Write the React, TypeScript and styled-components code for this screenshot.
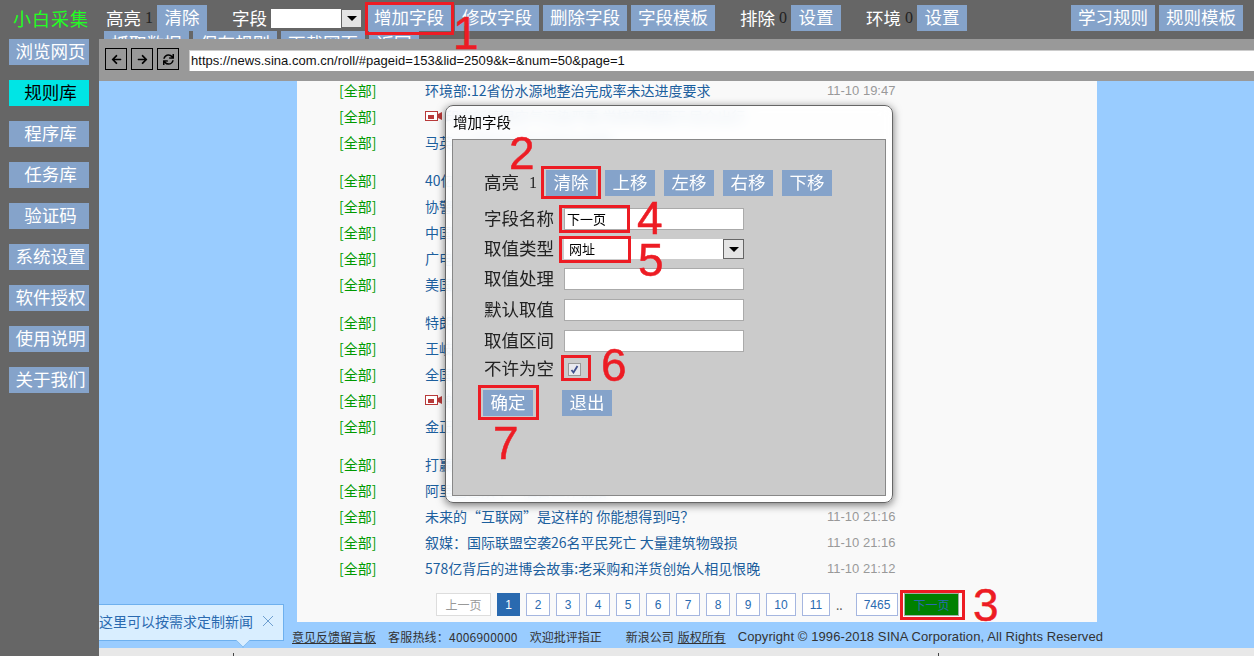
import React from "react";
import styled, { createGlobalStyle } from "styled-components";
import { FaArrowLeft, FaArrowRight, FaSync } from "react-icons/fa";

const GlobalStyle = createGlobalStyle`
  html, body {
    margin: 0;
    padding: 0;
    background: #666;
    font-family: "Noto Sans CJK SC", "Liberation Sans", sans-serif;
  }
  * {
    box-sizing: border-box;
  }
`;

const Page = styled.div`
  position: relative;
  width: 1254px;
  height: 656px;
  overflow: hidden;
  display: flex;
  flex-direction: column;
  background: #666;
`;

const TopBar = styled.div`
  height: 39px;
  flex: none;
  overflow: hidden;
  padding: 5px 0 0 13px;
`;

const TopRow = styled.div`
  display: flex;
  height: 26px;
  align-items: center;
`;

const HiddenRow = styled.div`
  display: flex;
  gap: 4px;
  padding-left: 91px;
`;

const Logo = styled.div`
  width: 76px;
  font-size: 18px;
  letter-spacing: 1px;
  line-height: 26px;
  color: #22ff22;
  white-space: nowrap;
`;

const Btn = styled.button<{ $w?: number; $ml?: number; $active?: boolean }>`
  flex: none;
  width: ${(p) => p.$w ?? 50}px;
  height: 26px;
  margin: 0 0 0 ${(p) => p.$ml ?? 0}px;
  padding: 0 0 2px;
  border: none;
  background: ${(p) => (p.$active ? "#00e5e5" : "#85a3ca")};
  color: ${(p) => (p.$active ? "#000" : "#fff")};
  font-family: inherit;
  font-size: 17.5px;
  line-height: 24px;
  white-space: nowrap;
`;

const SideBtn = styled(Btn)`
  padding-left: 3px;
`;

const BarLabel = styled.span<{ $ml: number }>`
  margin: 0 0 2px ${(p) => p.$ml}px;
  font-size: 17.5px;
  color: #fff;
  white-space: nowrap;
`;

const Count = styled.span<{ $w: number }>`
  flex: none;
  width: ${(p) => p.$w}px;
  text-align: center;
  font-family: "Liberation Serif", serif;
  font-size: 16px;
  color: #222;
`;

const SelectBox = styled.div<{ $w: number; $h: number; $ml?: number }>`
  display: flex;
  flex: none;
  align-items: center;
  width: ${(p) => p.$w}px;
  height: ${(p) => p.$h}px;
  margin-left: ${(p) => p.$ml ?? 0}px;
  background: #fff;
  font-size: 13px;
  color: #000;
`;

const SelectText = styled.span`
  flex: 1;
  padding: 0 0 2px 5px;
`;

const SelectArrow = styled.span`
  display: flex;
  align-items: center;
  justify-content: center;
  flex: none;
  width: 21px;
  height: 100%;
  border: 1px solid #666;
  background: #e4e4e4;

  &::before {
    content: "";
    border-style: solid;
    border-width: 5px 5px 0;
    border-color: #000 transparent transparent;
  }
`;

const Body = styled.div`
  display: flex;
  flex: 1;
  min-height: 0;
`;

const Sidebar = styled.div`
  display: flex;
  flex-direction: column;
  gap: 15px;
  flex: none;
  width: 99px;
  padding-left: 9px;
`;

const Main = styled.div`
  display: flex;
  flex-direction: column;
  flex: 1;
  min-width: 0;
`;

const Toolbar = styled.div`
  display: flex;
  align-items: center;
  flex: none;
  height: 42px;
  padding-left: 6px;
  background: #999;
`;

const NavBtn = styled.button`
  display: flex;
  align-items: center;
  justify-content: center;
  flex: none;
  width: 22px;
  height: 22px;
  margin: 0 4px 2px 0;
  padding: 0;
  border: 1px solid #000;
  background: #999;
  color: #000;
  font-size: 11px;
`;

const Address = styled.div`
  flex: 1;
  height: 21px;
  margin-left: 6px;
  padding-left: 1px;
  background: #fff;
  border-top: 1px solid #ccc;
  border-left: 1px solid #ccc;
  font-family: "Liberation Sans", sans-serif;
  font-size: 13px;
  letter-spacing: 0.03px;
  line-height: 20px;
  color: #111;
  white-space: nowrap;
`;

const Viewer = styled.div`
  position: relative;
  display: flex;
  flex-direction: column;
  flex: 1;
  min-height: 0;
  background: #99ccff;
`;

const NewsPanel = styled.div`
  flex: none;
  width: 800px;
  height: 541px;
  margin-left: 198px;
  overflow: hidden;
  background: #f9f9f9;
`;

const NewsList = styled.div`
  margin-top: -4px;
`;

const Group = styled.div`
  margin-bottom: 12px;
`;

const NewsRow = styled.div`
  display: flex;
  align-items: center;
  height: 26px;
  padding-left: 42px;
`;

const Tag = styled.span`
  flex: none;
  width: 86px;
  font-size: 14px;
  color: #009a00;
`;

const Title = styled.span`
  display: flex;
  align-items: center;
  gap: 3px;
  flex: none;
  width: 402px;
  font-size: 14px;
  color: #1c5f9e;
  white-space: nowrap;
`;

const Time = styled.span`
  font-family: "Liberation Sans", sans-serif;
  font-size: 13px;
  color: #999;
  white-space: nowrap;
`;

const Pager = styled.div`
  display: flex;
  align-items: center;
  gap: 6px;
  height: 23px;
  padding-left: 139px;
`;

const PageLink = styled.span<{ $w?: number; $kind?: "current" | "off" | "next" }>`
  display: flex;
  align-items: center;
  justify-content: center;
  flex: none;
  width: ${(p) => p.$w ?? 24}px;
  height: 23px;
  font-family: "Liberation Sans", "Noto Sans CJK SC", sans-serif;
  font-size: 12px;
  color: ${(p) =>
    p.$kind === "current" ? "#fff" : p.$kind === "off" ? "#999" : "#2a6ab0"};
  background: ${(p) =>
    p.$kind === "current" ? "#2a6ab0" : p.$kind === "next" ? "#008000" : "#fff"};
  border: 1px solid
    ${(p) =>
      p.$kind === "current"
        ? "#2a6ab0"
        : p.$kind === "off"
          ? "#ddd"
          : p.$kind === "next"
            ? "#9db0a0"
            : "#a5b6e0"};
`;

const Dots = styled.span`
  flex: none;
  width: 14px;
  font-size: 12px;
  color: #555;
`;

const Footer = styled.div`
  display: flex;
  align-items: center;
  flex: none;
  gap: 12px;
  height: 26px;
  padding: 2px 0 0 193px;
  font-size: 12px;
  color: #333;
  white-space: nowrap;
`;

const FootLink = styled.span<{ $ml?: number }>`
  margin-left: ${(p) => p.$ml ?? 0}px;
  text-decoration: underline;
`;

const FootText = styled.span<{ $ml?: number }>`
  margin-left: ${(p) => p.$ml ?? 0}px;
`;

const Hotline = styled.span`
  letter-spacing: 0.2px;
`;

const Copyright = styled.span`
  font-family: "Liberation Sans", sans-serif;
  font-size: 13px;
  letter-spacing: 0.09px;
`;

const Strip = styled.div`
  display: flex;
  gap: 704px;
  flex: none;
  height: 8px;
  padding-left: 134px;
  background: #e8e8e8;
`;

const StripTick = styled.span`
  width: 1px;
  height: 3px;
  margin-top: 5px;
  background: #444;
`;

const Tip = styled.div`
  position: absolute;
  left: 0;
  top: 523px;
  display: flex;
  align-items: center;
  justify-content: space-between;
  width: 185px;
  height: 37px;
  padding: 0 10px 3px 0;
  background: #d9eeff;
  border: 1px solid #6eb0ee;
  border-left: none;
  font-size: 14px;
  color: #2a6ab0;
  white-space: nowrap;

  &::after {
    content: "";
    position: absolute;
    left: 138px;
    bottom: -7px;
    width: 11px;
    height: 11px;
    background: #d9eeff;
    border-right: 1px solid #6eb0ee;
    border-bottom: 1px solid #6eb0ee;
    transform: rotate(45deg) scale(0.8);
  }
`;

const TipClose = styled.svg`
  width: 10px;
  height: 10px;
  stroke: #6e9fd0;
  fill: none;
`;

const Dialog = styled.div`
  position: absolute;
  left: 445px;
  top: 105px;
  width: 448px;
  height: 398px;
  padding: 0 6px;
  border: 1px solid #666;
  border-radius: 8px;
  background: rgba(255, 255, 255, 0.86);
  backdrop-filter: blur(7px);
  box-shadow: 0 2px 8px rgba(0, 0, 0, 0.55);
`;

const DialogTitle = styled.div`
  height: 33px;
  padding: 5px 0 0 1px;
  font-size: 14.5px;
  line-height: 22px;
  color: #000;
`;

const DialogBody = styled.div`
  display: flex;
  flex-direction: column;
  gap: 9px;
  height: 357px;
  padding: 30px 0 0 31px;
  background: #cbcbcb;
  border: 1px solid #888;
`;

const FormRow = styled.div`
  display: flex;
  align-items: center;
`;

const ButtonRow = styled.div`
  display: flex;
  gap: 9px;
  align-items: center;
  height: 26px;
  margin-bottom: 3px;
`;

const Label = styled.label<{ $w?: number }>`
  flex: none;
  width: ${(p) => p.$w ?? 80}px;
  height: 20px;
  font-size: 17.5px;
  line-height: 18px;
  color: #222;
  white-space: nowrap;
`;

const TextField = styled.div`
  width: 180px;
  height: 22px;
  padding-left: 2px;
  background: #fff;
  border: 1px solid #aaa;
  font-size: 13px;
  line-height: 19px;
  color: #000;
`;

const CheckRow = styled(FormRow)`
  height: 16px;
`;

const Check = styled.span`
  display: flex;
  align-items: center;
  justify-content: center;
  width: 13px;
  height: 13px;
  margin-left: 4px;
  background: #e8e8ee;
  border: 1px solid #999;
`;

const ActionRow = styled.div`
  display: flex;
  margin: 4px 0 0 -1px;
`;

const MarkBox = styled.div<{ $x: number; $y: number; $w: number; $h: number }>`
  position: absolute;
  left: ${(p) => p.$x}px;
  top: ${(p) => p.$y}px;
  width: ${(p) => p.$w}px;
  height: ${(p) => p.$h}px;
  border: 3px solid #ed1c24;
  pointer-events: none;
`;

const MarkNum = styled.div<{ $x: number; $y: number }>`
  position: absolute;
  left: ${(p) => p.$x}px;
  top: ${(p) => p.$y}px;
  font-family: "Liberation Sans", sans-serif;
  font-size: 46px;
  line-height: 46px;
  color: #ed1c24;
  -webkit-text-stroke: 0.5px #ed1c24;
  pointer-events: none;
`;

const VideoIcon = () => (
  <svg width="17" height="10" viewBox="0 0 17 10">
    <rect x="0.5" y="0.5" width="12" height="9" fill="#fff" stroke="#b83a3a" />
    <rect x="3" y="4" width="6" height="4" fill="#b83a3a" />
    <path d="M13 3l4-2v8l-4-2z" fill="#b83a3a" />
  </svg>
);

const sideItems = ["浏览网页", "规则库", "程序库", "任务库", "验证码", "系统设置", "软件授权", "使用说明", "关于我们"];

type News = { title: string; time?: string; video?: boolean };

const groups: News[][] = [
  [
    { title: "环境部:12省份水源地整治完成率未达进度要求", time: "11-10 19:47" },
    { title: "印度新德里空气污染严重 学校停课两天 民众出行", video: true },
    { title: "马英九:两岸关系应当和平发展" },
  ],
  [
    { title: "40亿美元大单落地 进博会成果丰硕" },
    { title: "协警冒充警察敲诈 被判处有期徒刑" },
    { title: "中国自主研发新型客机完成试飞" },
    { title: "广电总局:加强网络视听节目管理" },
    { title: "美国加州山火持续蔓延 多人遇难" },
  ],
  [
    { title: "特朗普出席一战停战纪念活动" },
    { title: "王岐山会见外国代表团一行" },
    { title: "全国多地迎来大风降温天气" },
    { title: "航拍冬日湿地候鸟翩翩起舞", video: true },
    { title: "金正恩视察新型武器试验现场" },
  ],
  [
    { title: "打赢脱贫攻坚战 多地出实招" },
    { title: "阿里巴巴双十一准备工作就绪" },
    { title: "未来的“互联网”是这样的 你能想得到吗？", time: "11-10 21:16" },
    { title: "叙媒：国际联盟空袭26名平民死亡 大量建筑物毁损", time: "11-10 21:16" },
    { title: "578亿背后的进博会故事:老采购和洋货创始人相见恨晚", time: "11-10 21:12" },
  ],
];

const boxes = [
  { x: 365, y: 2, w: 89, h: 33 },
  { x: 541, y: 166, w: 60, h: 33 },
  { x: 559, y: 205, w: 71, h: 28 },
  { x: 559, y: 236, w: 72, h: 27 },
  { x: 561, y: 355, w: 30, h: 26 },
  { x: 478, y: 385, w: 61, h: 35 },
  { x: 900, y: 590, w: 65, h: 30 },
];

const digits = [
  { n: "1", x: 453, y: 10 },
  { n: "2", x: 509, y: 130 },
  { n: "4", x: 637, y: 195 },
  { n: "5", x: 638, y: 237 },
  { n: "6", x: 601, y: 342 },
  { n: "7", x: 493, y: 420 },
  { n: "3", x: 973, y: 582 },
];

const pages = ["2", "3", "4", "5", "6", "7", "8", "9"];

export default function App() {
  return (
    <Page>
      <GlobalStyle />
      <TopBar>
        <TopRow>
          <Logo>小白采集</Logo>
          <BarLabel $ml={17}>高亮</BarLabel>
          <Count $w={16}>1</Count>
          <Btn>清除</Btn>
          <BarLabel $ml={25}>字段</BarLabel>
          <SelectBox $w={91} $h={19} $ml={4}>
            <SelectText />
            <SelectArrow />
          </SelectBox>
          <Btn $w={84} $ml={5}>增加字段</Btn>
          <Btn $w={84} $ml={4}>修改字段</Btn>
          <Btn $w={84} $ml={4}>删除字段</Btn>
          <Btn $w={84} $ml={4}>字段模板</Btn>
          <BarLabel $ml={25}>排除</BarLabel>
          <Count $w={16}>0</Count>
          <Btn>设置</Btn>
          <BarLabel $ml={25}>环境</BarLabel>
          <Count $w={16}>0</Count>
          <Btn>设置</Btn>
          <Btn $w={84} $ml={104}>学习规则</Btn>
          <Btn $w={84} $ml={4}>规则模板</Btn>
        </TopRow>
        <HiddenRow>
          <Btn $w={85}>抓取数据</Btn>
          <Btn $w={84}>保存规则</Btn>
          <Btn $w={84}>下载网页</Btn>
          <Btn>返回</Btn>
        </HiddenRow>
      </TopBar>
      <Body>
        <Sidebar>
          {sideItems.map((item) => (
            <SideBtn key={item} $w={80} $active={item === "规则库"}>
              {item}
            </SideBtn>
          ))}
        </Sidebar>
        <Main>
          <Toolbar>
            <NavBtn><FaArrowLeft /></NavBtn>
            <NavBtn><FaArrowRight /></NavBtn>
            <NavBtn><FaSync /></NavBtn>
            <Address>https://news.sina.com.cn/roll/#pageid=153&amp;lid=2509&amp;k=&amp;num=50&amp;page=1</Address>
          </Toolbar>
          <Viewer>
            <NewsPanel>
              <NewsList>
                {groups.map((group, i) => (
                  <Group key={i}>
                    {group.map((news) => (
                      <NewsRow key={news.title}>
                        <Tag>[全部]</Tag>
                        <Title>
                          {news.video && <VideoIcon />}
                          {news.title}
                        </Title>
                        {news.time && <Time>{news.time}</Time>}
                      </NewsRow>
                    ))}
                  </Group>
                ))}
              </NewsList>
              <Pager>
                <PageLink $w={55} $kind="off">上一页</PageLink>
                <PageLink $w={23} $kind="current">1</PageLink>
                {pages.map((n) => (
                  <PageLink key={n}>{n}</PageLink>
                ))}
                <PageLink $w={30}>10</PageLink>
                <PageLink $w={28}>11</PageLink>
                <Dots>..</Dots>
                <PageLink $w={42}>7465</PageLink>
                <PageLink $w={55} $kind="next">下一页</PageLink>
              </Pager>
            </NewsPanel>
            <Footer>
              <FootLink>意见反馈留言板</FootLink>
              <Hotline>客服热线：4006900000</Hotline>
              <FootText>欢迎批评指正</FootText>
              <FootText $ml={12}>新浪公司</FootText>
              <FootLink $ml={-8}>版权所有</FootLink>
              <Copyright>Copyright © 1996-2018 SINA Corporation, All Rights Reserved</Copyright>
            </Footer>
            <Strip>
              <StripTick />
              <StripTick />
            </Strip>
            <Tip>
              这里可以按需求定制新闻
              <TipClose viewBox="0 0 10 10">
                <path d="M0 0l10 10M10 0L0 10" />
              </TipClose>
            </Tip>
          </Viewer>
        </Main>
      </Body>

      <Dialog>
        <DialogTitle>增加字段</DialogTitle>
        <DialogBody>
          <ButtonRow>
            <Label $w={36}>高亮</Label>
            <Count $w={8}>1</Count>
            <Btn>清除</Btn>
            <Btn>上移</Btn>
            <Btn>左移</Btn>
            <Btn>右移</Btn>
            <Btn>下移</Btn>
          </ButtonRow>
          <FormRow>
            <Label>字段名称</Label>
            <TextField>下一页</TextField>
          </FormRow>
          <FormRow>
            <Label>取值类型</Label>
            <SelectBox $w={180} $h={20}>
              <SelectText>网址</SelectText>
              <SelectArrow />
            </SelectBox>
          </FormRow>
          <FormRow>
            <Label>取值处理</Label>
            <TextField />
          </FormRow>
          <FormRow>
            <Label>默认取值</Label>
            <TextField />
          </FormRow>
          <FormRow>
            <Label>取值区间</Label>
            <TextField />
          </FormRow>
          <CheckRow>
            <Label>不许为空</Label>
            <Check>
              <svg width="9" height="9" viewBox="0 0 9 9">
                <path d="M1.5 5l2 2.5L7.5 1" fill="none" stroke="#3f4f8c" strokeWidth="1.8" />
              </svg>
            </Check>
          </CheckRow>
          <ActionRow>
            <Btn>确定</Btn>
            <Btn $ml={29}>退出</Btn>
          </ActionRow>
        </DialogBody>
      </Dialog>

      {boxes.map((b) => (
        <MarkBox key={`${b.x}-${b.y}`} $x={b.x} $y={b.y} $w={b.w} $h={b.h} />
      ))}
      {digits.map((d) => (
        <MarkNum key={d.n} $x={d.x} $y={d.y}>
          {d.n}
        </MarkNum>
      ))}
    </Page>
  );
}
